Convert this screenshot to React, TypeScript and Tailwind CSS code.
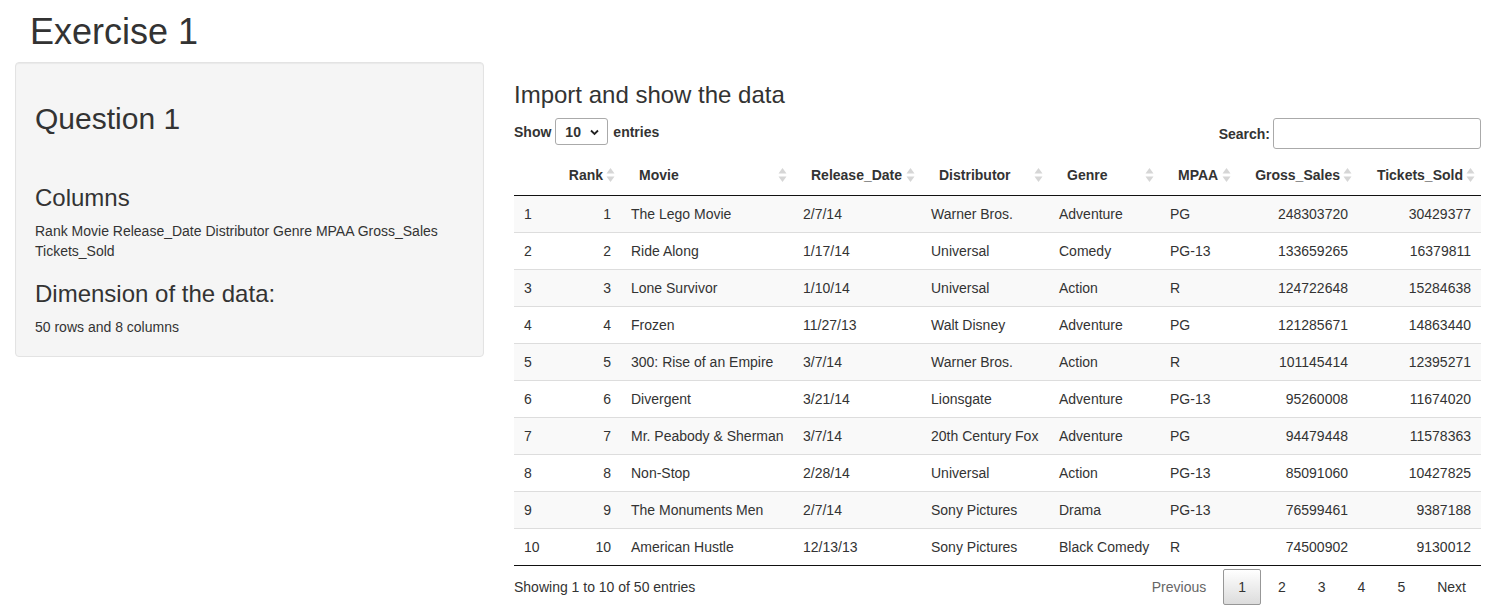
import React from 'react';

const rows = [
  ['1', '1', 'The Lego Movie', '2/7/14', 'Warner Bros.', 'Adventure', 'PG', '248303720', '30429377'],
  ['2', '2', 'Ride Along', '1/17/14', 'Universal', 'Comedy', 'PG-13', '133659265', '16379811'],
  ['3', '3', 'Lone Survivor', '1/10/14', 'Universal', 'Action', 'R', '124722648', '15284638'],
  ['4', '4', 'Frozen', '11/27/13', 'Walt Disney', 'Adventure', 'PG', '121285671', '14863440'],
  ['5', '5', '300: Rise of an Empire', '3/7/14', 'Warner Bros.', 'Action', 'R', '101145414', '12395271'],
  ['6', '6', 'Divergent', '3/21/14', 'Lionsgate', 'Adventure', 'PG-13', '95260008', '11674020'],
  ['7', '7', 'Mr. Peabody & Sherman', '3/7/14', '20th Century Fox', 'Adventure', 'PG', '94479448', '11578363'],
  ['8', '8', 'Non-Stop', '2/28/14', 'Universal', 'Action', 'PG-13', '85091060', '10427825'],
  ['9', '9', 'The Monuments Men', '2/7/14', 'Sony Pictures', 'Drama', 'PG-13', '76599461', '9387188'],
  ['10', '10', 'American Hustle', '12/13/13', 'Sony Pictures', 'Black Comedy', 'R', '74500902', '9130012'],
];

// column header, width, right aligned
const cols: { name: string; w: string; right: boolean; sort: boolean }[] = [
  { name: '', w: 'w-[36px]', right: false, sort: false },
  { name: 'Rank', w: 'w-[71px]', right: true, sort: true },
  { name: 'Movie', w: 'w-[172px]', right: false, sort: true },
  { name: 'Release_Date', w: 'w-[128px]', right: false, sort: true },
  { name: 'Distributor', w: 'w-[128px]', right: false, sort: true },
  { name: 'Genre', w: 'w-[111px]', right: false, sort: true },
  { name: 'MPAA', w: 'w-[77px]', right: false, sort: true },
  { name: 'Gross_Sales', w: 'w-[121px]', right: true, sort: true },
  { name: 'Tickets_Sold', w: 'w-[123px]', right: true, sort: true },
];

function SortIcon() {
  return (
    <svg
      className="absolute right-[6px] top-1/2 -translate-y-1/2"
      width="9"
      height="15"
      viewBox="0 0 9 15"
    >
      <polygon points="4.5,0.5 8.5,6 0.5,6" fill="#d6d6d6" />
      <polygon points="0.5,9 8.5,9 4.5,14.5" fill="#d6d6d6" />
    </svg>
  );
}

function PageButton({ label, current, disabled }: { label: string; current?: boolean; disabled?: boolean }) {
  return (
    <span
      className={`ml-[2px] inline-block min-w-[21px] rounded-[2px] border px-[14px] py-[7px] text-center leading-[20px] ${
        current
          ? 'border-[#979797] bg-gradient-to-b from-white to-[#dcdcdc] text-[#333]'
          : 'border-transparent ' + (disabled ? 'text-[#666]' : 'text-[#333]')
      }`}
    >
      {label}
    </span>
  );
}

export default function App() {
  return (
    <div className="min-h-screen bg-white text-[14px] leading-[20px] text-[#333] font-['Liberation_Sans',Arial,sans-serif]">
      <h1 className="mb-[10px] mt-[12px] pl-[30px] text-[36px] font-normal leading-[39.6px]">Exercise 1</h1>

      <div className="flex items-start pl-[15px]">
        {/* sidebar well */}
        <div className="w-[469px] rounded-[4px] border border-[#e3e3e3] bg-[#f5f5f5] p-[19px] shadow-[inset_0_1px_1px_rgba(0,0,0,0.05)]">
          <h2 className="mt-[20px] text-[30px] font-normal leading-[33px]">Question 1</h2>
          <h3 className="mb-[10px] mt-[50px] text-[24px] font-normal leading-[26.4px]">Columns</h3>
          <p>Rank Movie Release_Date Distributor Genre MPAA Gross_Sales Tickets_Sold</p>
          <h3 className="mb-[10px] mt-[20px] text-[24px] font-normal leading-[26.4px]">Dimension of the data:</h3>
          <p>50 rows and 8 columns</p>
        </div>

        {/* main panel */}
        <div className="ml-[30px] w-[967px]">
          <h3 className="mb-[10px] mt-[20px] text-[24px] font-normal leading-[26.4px]">Import and show the data</h3>

          <div className="flex items-start justify-between">
            <div className="flex h-[27px] items-center font-bold">
              <span>Show</span>
              <div className="relative ml-[4px] mr-[5px] flex h-[27px] w-[53px] items-center rounded-[3px] border border-[#aaa] bg-white pl-[9px]">
                <span>10</span>
                <svg className="absolute right-[8px] top-[10px]" width="9" height="7" viewBox="0 0 9 7">
                  <path d="M1 1.5 L4.5 5 L8 1.5" fill="none" stroke="#222" strokeWidth="1.8" />
                </svg>
              </div>
              <span>entries</span>
            </div>
            <div className="flex items-center font-bold">
              <span>Search:</span>
              <div className="ml-[3px] h-[31px] w-[208px] rounded-[3px] border border-[#aaa] bg-white" />
            </div>
          </div>

          <table className="mt-[6px] w-[967px] table-fixed border-separate border-spacing-0">
            <colgroup>
              {cols.map((c, i) => (
                <col key={i} className={c.w} />
              ))}
            </colgroup>
            <thead>
              <tr>
                {cols.map((c, i) => (
                  <th
                    key={i}
                    className={`relative whitespace-nowrap border-b border-[#111] px-[18px] py-[10px] font-bold ${
                      c.right ? 'text-right' : 'text-left'
                    }`}
                  >
                    {c.name}
                    {c.sort && <SortIcon />}
                  </th>
                ))}
              </tr>
            </thead>
            <tbody>
              {rows.map((r, ri) => (
                <tr key={ri} className={ri % 2 === 0 ? 'bg-[#f9f9f9]' : 'bg-white'}>
                  {r.map((v, ci) => (
                    <td
                      key={ci}
                      className={`whitespace-nowrap px-[10px] py-[8px] ${ri > 0 ? 'border-t border-[#ddd]' : ''} ${
                        ri === rows.length - 1 ? 'border-b border-b-[#111]' : ''
                      } ${cols[ci].right ? 'text-right' : 'text-left'}`}
                    >
                      {v}
                    </td>
                  ))}
                </tr>
              ))}
            </tbody>
          </table>

          <div className="flex items-start justify-between">
            <div className="pt-[10.5px]">Showing 1 to 10 of 50 entries</div>
            <div className="flex pt-[3px]">
              <PageButton label="Previous" disabled />
              <PageButton label="1" current />
              <PageButton label="2" />
              <PageButton label="3" />
              <PageButton label="4" />
              <PageButton label="5" />
              <PageButton label="Next" />
            </div>
          </div>
        </div>
      </div>
    </div>
  );
}
